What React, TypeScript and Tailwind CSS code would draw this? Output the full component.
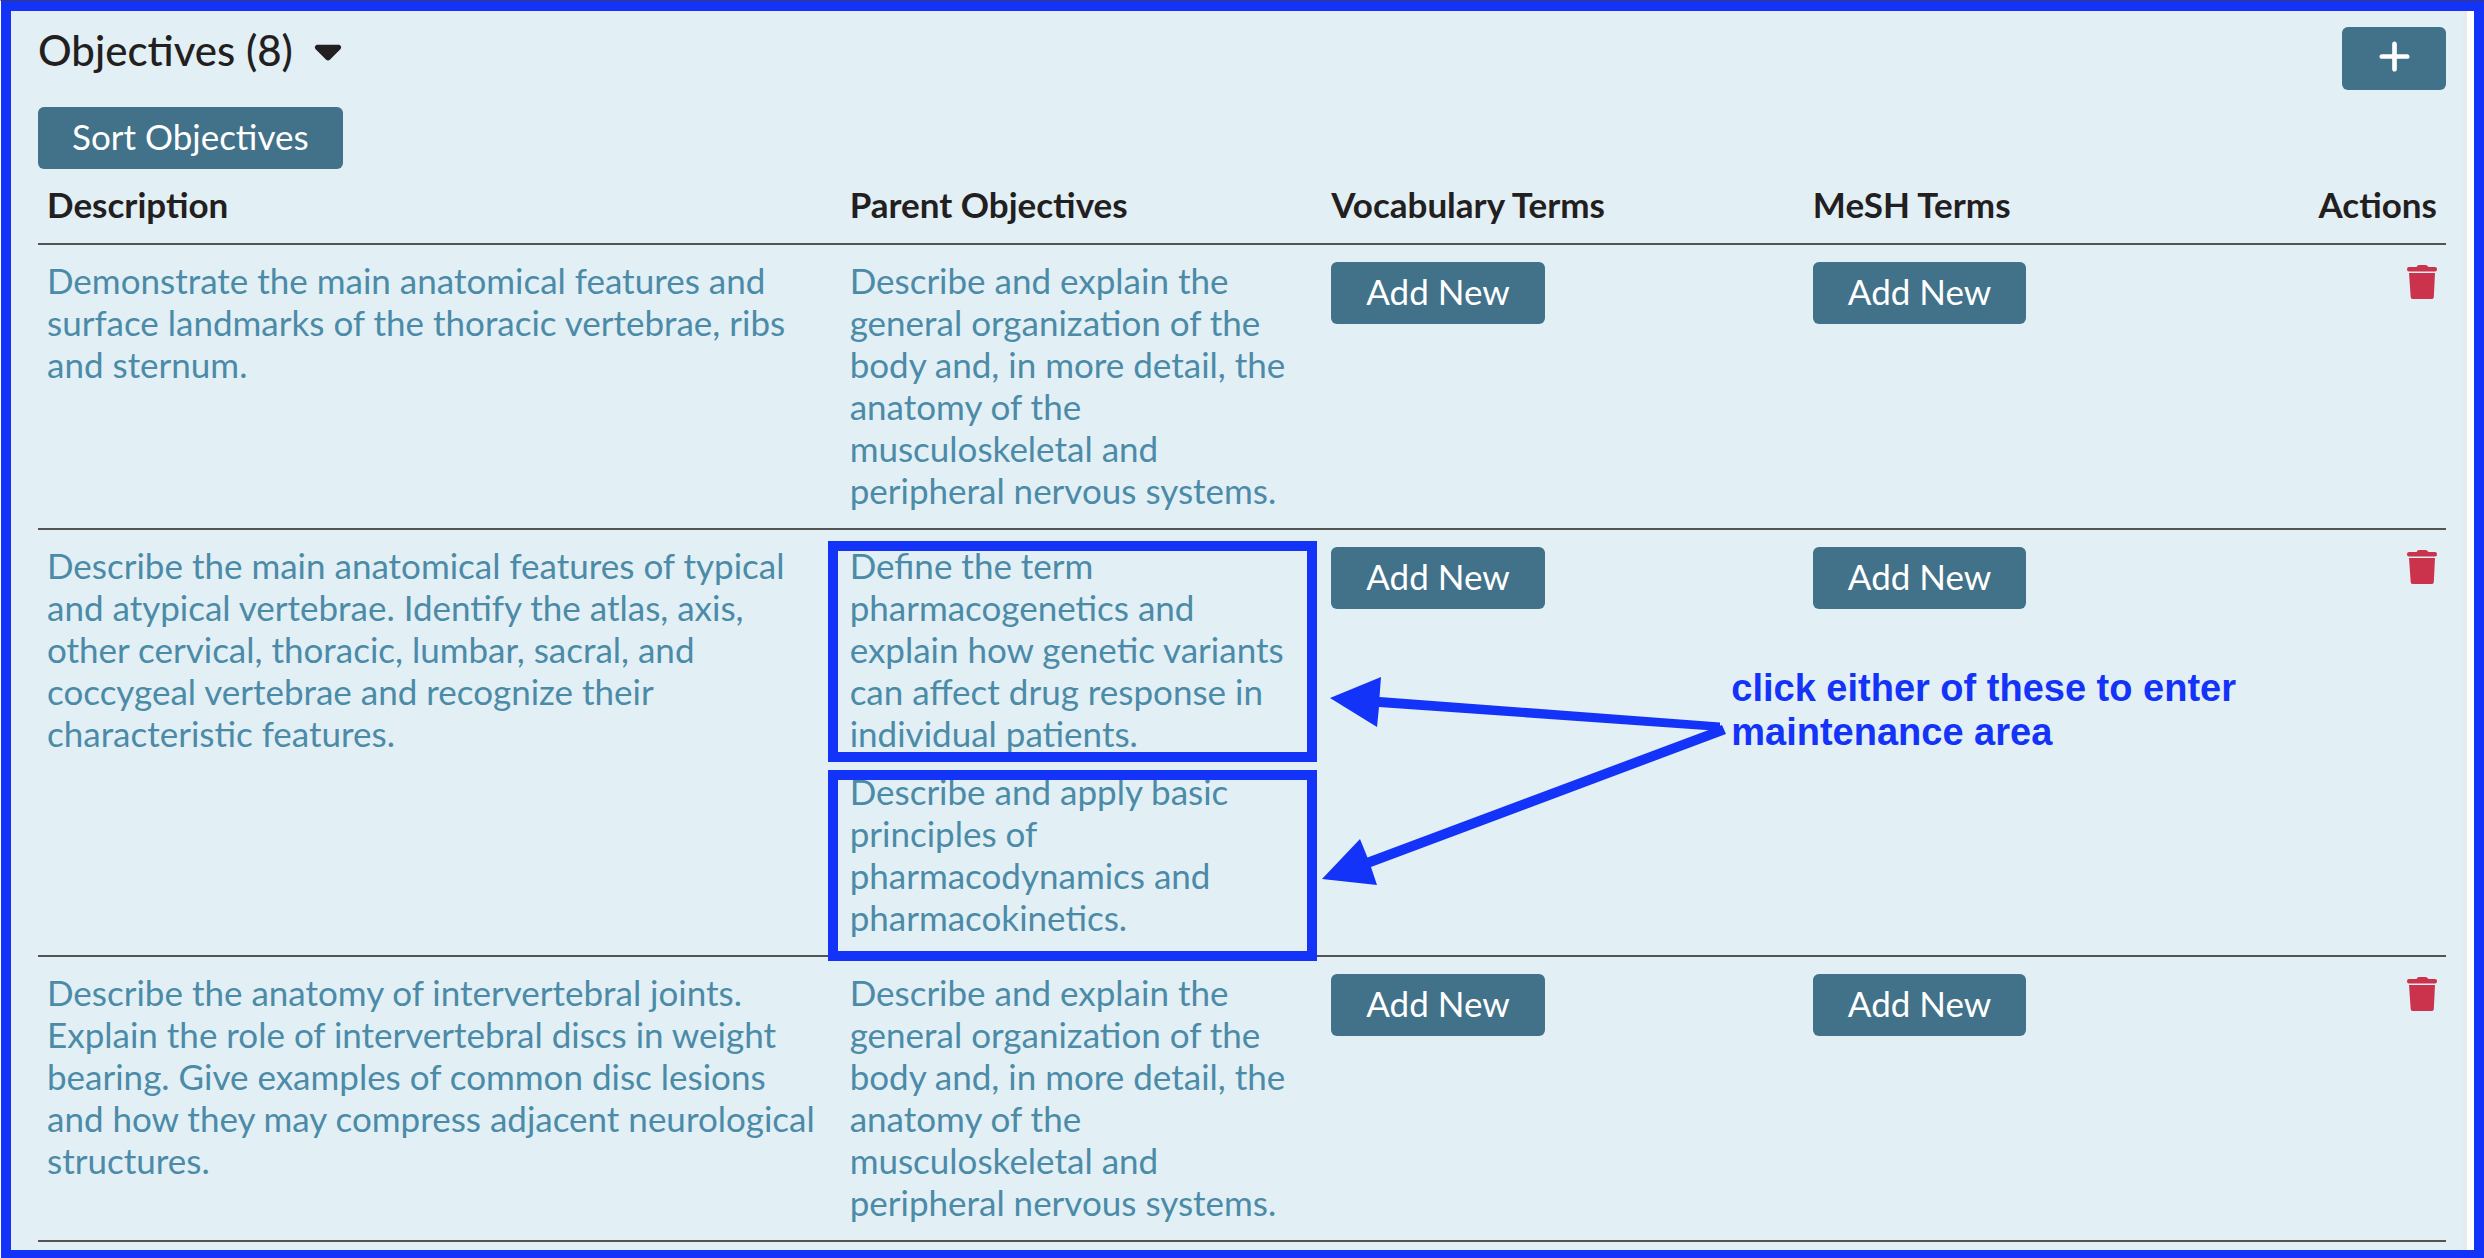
import { FaCaretDown, FaPlus } from "react-icons/fa6";

type Objective = {
  description: string;
  parents: string[];
  outlined?: boolean;
};

const MUSCULOSKELETAL =
  "Describe and explain the general organization of the body and, in more detail, the anatomy of the musculoskeletal and peripheral nervous systems.";

const objectives: Objective[] = [
  {
    description:
      "Demonstrate the main anatomical features and surface landmarks of the thoracic vertebrae, ribs and sternum.",
    parents: [MUSCULOSKELETAL],
  },
  {
    description:
      "Describe the main anatomical features of typical and atypical vertebrae. Identify the atlas, axis, other cervical, thoracic, lumbar, sacral, and coccygeal vertebrae and recognize their characteristic features.",
    parents: [
      "Define the term pharmacogenetics and explain how genetic variants can affect drug response in individual patients.",
      "Describe and apply basic principles of pharmacodynamics and pharmacokinetics.",
    ],
    outlined: true,
  },
  {
    description:
      "Describe the anatomy of intervertebral joints. Explain the role of intervertebral discs in weight bearing. Give examples of common disc lesions and how they may compress adjacent neurological structures.",
    parents: [MUSCULOSKELETAL],
  },
];

const outlineClasses = ["-top-[3px] -bottom-2", "top-0 -bottom-[23px]"];

function TrashIcon() {
  return (
    <svg width="30" height="34" viewBox="0 0 30 34" fill="currentColor" aria-hidden="true">
      <path d="M9.500 2 10.500.5Q11 0 12 0h6.500q1 0 1.500.5L21.500 2H28q2 0 2 2v.5q0 2-2 2H2q-2 0-2-2V4q0-2 2-2z" />
      <path d="M2 8h26l-1.200 24q-.1 2-1.800 2H5.500q-1.700 0-1.800-2z" />
    </svg>
  );
}

function AddNew({ label }: { label: string }) {
  return (
    <button type="button" aria-label={`Add New ${label}`} className="block h-[62px] rounded-md bg-[#41728a] px-[35px] pb-1 text-white">
      Add New
    </button>
  );
}

function Callout() {
  return (
    <div className="pointer-events-none absolute top-[128px] -left-[9px] z-10 flex gap-1.5 text-[#1433f8]">
      <svg width="412" height="240" viewBox="0 0 412 240" fill="currentColor" className="overflow-visible" aria-hidden="true">
        <path d="M17 40 68 19 66.500 39 407 64.500 407 73 66 49 64 69z" />
        <path d="M9 221 47 181 54.500 199.500 409 67 413 76 58 209 64 227z" />
      </svg>
      <p className="w-[540px] pt-2 font-['Liberation_Sans',Arial,sans-serif] text-[38px] leading-[44px] font-bold">
        click either of these to enter maintenance area
      </p>
    </div>
  );
}

export default function App() {
  return (
    <div className="min-h-screen border-t border-l border-t-[#3a3670] border-l-white bg-white font-[Lato,sans-serif] text-[35px] leading-[42px] text-[#231f20]">
      <div className="flex min-h-[calc(100vh-1px)] flex-col border-[10px] border-b-8 border-[#1433f8] pr-[7px]">
        <main className="flex-1 border-r-4 border-[#e6ebeb] bg-[#e2eff5] pr-[17px] pl-[27px]">
          <header className="flex items-start justify-between pt-4">
            <h2>
              <button type="button" className="flex h-12 items-center gap-3.5 pb-0.5 text-[42px] font-medium">
                Objectives (8)
                <FaCaretDown className="size-[42px]" />
              </button>
            </h2>
            <button type="button" aria-label="Add objective" className="flex h-[63px] w-[104px] items-center justify-center rounded-md bg-[#41728a] pb-1 text-white">
              <FaPlus className="size-[37px]" />
            </button>
          </header>
          <button type="button" className="mt-[17px] block h-[62px] rounded-md bg-[#41728a] px-[34px] pb-1 text-white">
            Sort Objectives
          </button>
          <table className="w-full table-fixed border-collapse text-left">
            <thead>
              <tr className="border-b-2 border-[#545454]">
                <th className="w-1/3 px-[9px] pt-3.5 pb-[18px] font-bold">Description</th>
                <th className="w-1/5 px-[9px] pt-3.5 pb-[18px] font-bold">Parent Objectives</th>
                <th className="w-1/5 px-[9px] pt-3.5 pb-[18px] font-bold">Vocabulary Terms</th>
                <th className="w-1/5 px-[9px] pt-3.5 pb-[18px] font-bold">MeSH Terms</th>
                <th className="pt-3.5 pr-[9px] pb-[18px] text-right font-bold">
                  <span className="flex justify-end">Actions</span>
                </th>
              </tr>
            </thead>
            <tbody>
              {objectives.map((o) => (
                <tr key={o.description} className="border-b-2 border-[#545454] align-top">
                  <td className="pt-3.5 pr-4 pb-[17px] pl-[9px]">
                    <button type="button" className="block text-left text-[#4b8ba8]">{o.description}</button>
                  </td>
                  <td className="pt-3.5 pr-[21px] pb-[17px] pl-[9px]">
                    <ul className="flex flex-col gap-4">
                      {o.parents.map((p, i) => (
                        <li key={p} className="relative">
                          <button type="button" className="block text-left text-[#4b8ba8]">{p}</button>
                          {o.outlined && (
                            <span className={`pointer-events-none absolute -right-4 -left-[22px] border-[10px] border-[#1433f8] ${outlineClasses[i]}`} />
                          )}
                        </li>
                      ))}
                    </ul>
                  </td>
                  <td className="relative px-[9px] pt-[17px]">
                    <AddNew label="vocabulary term" />
                    {o.outlined && <Callout />}
                  </td>
                  <td className="px-[9px] pt-[17px]">
                    <AddNew label="MeSH term" />
                  </td>
                  <td className="pt-[17px] pr-[9px]">
                    <button type="button" aria-label="Delete objective" className="ml-auto block pt-[3px] text-[#cb334d]">
                      <TrashIcon />
                    </button>
                  </td>
                </tr>
              ))}
            </tbody>
          </table>
        </main>
      </div>
    </div>
  );
}
